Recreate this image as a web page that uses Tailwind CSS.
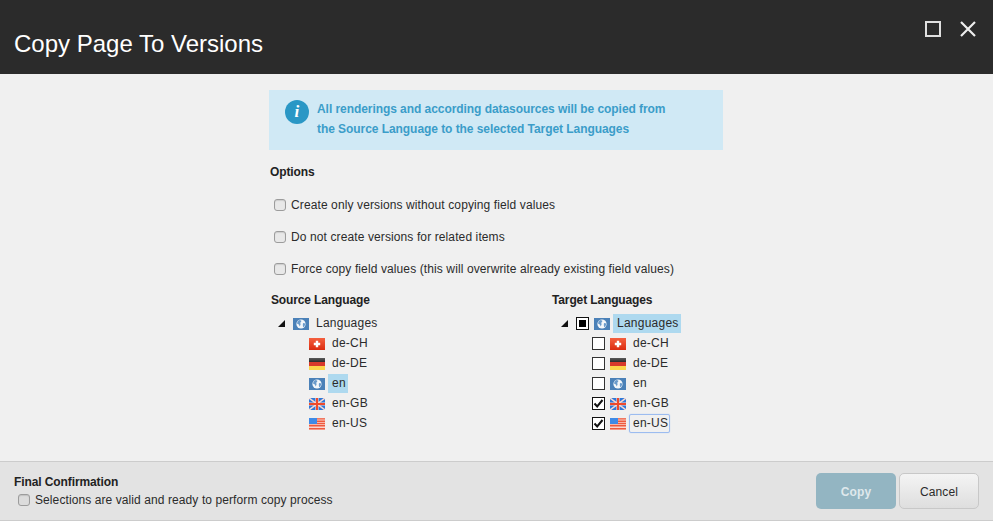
<!DOCTYPE html>
<html>
<head>
<meta charset="utf-8">
<script src="https://cdn.jsdelivr.net/npm/@tailwindcss/browser@4"></script>
</head>
<body class="m-0">
<svg width="0" height="0" class="absolute">
<defs>
<symbol id="globe" viewBox="0 0 16 12"><rect width="16" height="12" fill="#4b81b8"/><circle cx="8" cy="6" r="4.6" fill="#f4f7fa"/><path d="M6.2 2 8.2 2.4 8.2 3.8 7.2 4.8 7.6 6.3 6.8 8.6 5.8 6.6 4 5.4 4.6 3.4ZM10 5 12.4 5.4 11.6 8 10.2 9.6 9.8 7Z" fill="#6b9bcb"/></symbol>
<symbol id="ch" viewBox="0 0 16 12"><defs><linearGradient id="chg" x1="0" y1="0" x2="0" y2="1"><stop offset="0" stop-color="#f4603f"/><stop offset="1" stop-color="#dc2c10"/></linearGradient></defs><rect width="16" height="12" fill="url(#chg)"/><path d="M6.8 2.8H9.2V4.8H11.2V7.2H9.2V9.2H6.8V7.2H4.8V4.8H6.8Z" fill="#fff"/></symbol>
<symbol id="de" viewBox="0 0 16 12"><defs><linearGradient id="deg" x1="0" y1="0" x2="0" y2="1"><stop offset="0" stop-color="#5a5a5a"/><stop offset="1" stop-color="#2a2a2a"/></linearGradient></defs><rect width="16" height="4" fill="url(#deg)"/><rect y="4" width="16" height="4" fill="#d8392b"/><rect y="8" width="16" height="4" fill="#fcd44a"/></symbol>
<symbol id="gb" viewBox="0 0 16 12"><rect width="16" height="12" fill="#2f78d8"/><path d="M0 0 16 12M16 0 0 12" stroke="#f8d8d0" stroke-width="1.5"/><path d="M8 0V12M0 6H16" stroke="#f8d8d0" stroke-width="3.2"/><path d="M8 0V12M0 6H16" stroke="#ee4a2c" stroke-width="2"/></symbol>
<symbol id="us" viewBox="0 0 16 12"><rect width="16" height="12" fill="#fbd5cc"/><path d="M0 .9H16M0 3.2H16M0 5.5H16M0 7.8H16M0 10.8H16" stroke="#ee5a3e" stroke-width="1.4"/><rect width="8" height="6" fill="#3f8ae6"/></symbol>
</defs>
</svg>
<div class="w-[993px] h-[521px] overflow-hidden flex flex-col bg-[#f0f0f0] text-[12px] tracking-[0.11px] text-[#2b2b2b] font-['Liberation_Sans',Arial,sans-serif]">
  <header class="h-[74px] shrink-0 bg-[#2b2b2b] flex items-start justify-between pl-[14px] pr-[17px] tracking-normal">
    <h1 class="mt-[29px] text-[24px] leading-[30px] text-white font-normal">Copy Page To Versions</h1>
    <div class="flex gap-[19px] mt-[21px] items-center">
      <svg class="w-4 h-4" viewBox="0 0 16 16"><rect x="1" y="1" width="14" height="14" fill="none" stroke="#e0e0e0" stroke-width="2"/></svg>
      <svg class="w-4 h-4" viewBox="0 0 16 16"><path d="M1 1 15 15M15 1 1 15" stroke="#eeeeee" stroke-width="2.2"/></svg>
    </div>
  </header>

  <main class="h-[387px] shrink-0 pl-[269px] pt-4">
    <div class="w-[454px] h-[60px] bg-[#d0e9f5] flex items-start pl-[16px] pt-[9px]">
      <div class="w-6 h-6 mt-[1px] rounded-full bg-[#2a97c5] text-white flex items-center justify-center font-['Liberation_Serif',serif] font-bold italic text-[17px]">i</div>
      <p class="ml-2 font-bold text-[#3b9dc9] leading-5 text-[12px] tracking-[-0.06px]">All renderings and according datasources will be copied from<br>the Source Language to the selected Target Languages</p>
    </div>
    <h2 class="mt-[14px] ml-[1px] font-bold text-[12px] leading-[16px] text-[#222] tracking-[-0.1px]">Options</h2>
    <div class="mt-[9px] flex flex-col">
      <label class="h-8 flex items-center pl-[5px] gap-[5px]"><span class="w-3 h-3 rounded-[3px] border border-[#9c9c9c] bg-[#e8e8e8] shadow-[inset_0_1px_1px_rgba(0,0,0,0.12)]"></span>Create only versions without copying field values</label>
      <label class="h-8 flex items-center pl-[5px] gap-[5px]"><span class="w-3 h-3 rounded-[3px] border border-[#9c9c9c] bg-[#e8e8e8] shadow-[inset_0_1px_1px_rgba(0,0,0,0.12)]"></span>Do not create versions for related items</label>
      <label class="h-8 flex items-center pl-[5px] gap-[5px]"><span class="w-3 h-3 rounded-[3px] border border-[#9c9c9c] bg-[#e8e8e8] shadow-[inset_0_1px_1px_rgba(0,0,0,0.12)]"></span>Force copy field values (this will overwrite already existing field values)</label>
    </div>
    <div class="flex">
      <section class="w-[281px] pl-[2px]">
        <h2 class="font-bold leading-[16px] mt-[7px] text-[#222] tracking-[-0.13px]">Source Language</h2>
        <div class="mt-[5px] flex flex-col text-[12px] tracking-[0.24px]">
          <div class="h-5 flex items-center">
            <svg class="w-[7px] h-[7px] ml-[7px]" viewBox="0 0 7 7"><path d="M7 0V7H0Z" fill="#111"/></svg>
            <svg class="w-4 h-3 ml-[8px] mt-[2px]"><use href="#globe"/></svg>
            <span class="ml-[7px]">Languages</span>
          </div>
          <div class="h-5 flex items-center pl-[38px]"><svg class="w-4 h-3 mt-[2px]"><use href="#ch"/></svg><span class="ml-[7px]">de-CH</span></div>
          <div class="h-5 flex items-center pl-[38px]"><svg class="w-4 h-3 mt-[2px]"><use href="#de"/></svg><span class="ml-[7px]">de-DE</span></div>
          <div class="h-5 flex items-center pl-[38px]"><svg class="w-4 h-3 mt-[2px]"><use href="#globe"/></svg><span class="ml-[3px] pl-[4px] pr-[2px] h-[19px] leading-[18px] bg-[#aed9ef]">en</span></div>
          <div class="h-5 flex items-center pl-[38px]"><svg class="w-4 h-3 mt-[2px]"><use href="#gb"/></svg><span class="ml-[7px]">en-GB</span></div>
          <div class="h-5 flex items-center pl-[38px]"><svg class="w-4 h-3 mt-[2px]"><use href="#us"/></svg><span class="ml-[7px]">en-US</span></div>
        </div>
      </section>
      <section class="w-[172px] pl-[2px]">
        <h2 class="font-bold leading-[16px] mt-[7px] text-[#222] tracking-[-0.13px]">Target Languages</h2>
        <div class="mt-[5px] flex flex-col text-[12px] tracking-[0.24px]">
          <div class="h-5 flex items-center">
            <svg class="w-[7px] h-[7px] ml-[9px]" viewBox="0 0 7 7"><path d="M7 0V7H0Z" fill="#111"/></svg>
            <span class="ml-[8px] w-[13px] h-[13px] border border-[#111] bg-white flex items-center justify-center"><span class="w-[7px] h-[7px] bg-black"></span></span>
            <svg class="w-4 h-3 ml-[5px] mt-[2px]"><use href="#globe"/></svg>
            <span class="ml-[3px] pl-[4px] pr-[2px] h-[19px] leading-[18px] bg-[#aed9ef]">Languages</span>
          </div>
          <div class="h-5 flex items-center pl-[40px]"><span class="w-[13px] h-[13px] border border-[#333] bg-white"></span><svg class="w-4 h-3 ml-[5px] mt-[2px]"><use href="#ch"/></svg><span class="ml-[7px]">de-CH</span></div>
          <div class="h-5 flex items-center pl-[40px]"><span class="w-[13px] h-[13px] border border-[#333] bg-white"></span><svg class="w-4 h-3 ml-[5px] mt-[2px]"><use href="#de"/></svg><span class="ml-[7px]">de-DE</span></div>
          <div class="h-5 flex items-center pl-[40px]"><span class="w-[13px] h-[13px] border border-[#333] bg-white"></span><svg class="w-4 h-3 ml-[5px] mt-[2px]"><use href="#globe"/></svg><span class="ml-[7px]">en</span></div>
          <div class="h-5 flex items-center pl-[40px]"><span class="w-[13px] h-[13px] border border-[#111] bg-white flex items-center justify-center"><svg class="w-[11px] h-[11px]" viewBox="0 0 11 11"><path d="M1.5 5.5 4.2 8.5 9.5 2" fill="none" stroke="#111" stroke-width="2"/></svg></span><svg class="w-4 h-3 ml-[5px] mt-[2px]"><use href="#gb"/></svg><span class="ml-[7px]">en-GB</span></div>
          <div class="h-5 flex items-center pl-[40px]"><span class="w-[13px] h-[13px] border border-[#111] bg-white flex items-center justify-center"><svg class="w-[11px] h-[11px]" viewBox="0 0 11 11"><path d="M1.5 5.5 4.2 8.5 9.5 2" fill="none" stroke="#111" stroke-width="2"/></svg></span><svg class="w-4 h-3 ml-[5px] mt-[2px]"><use href="#us"/></svg><span class="ml-[3px] pl-[3px] pr-[1px] h-[19px] leading-[17px] border border-[#9cbcf0] rounded-[2px] shadow-[0_0_1px_#9cbcf0]">en-US</span></div>
        </div>
      </section>
    </div>
  </main>

  <footer class="h-[60px] shrink-0 bg-[#e3e3e3] border-t border-b border-[#cccccc] flex items-center justify-between pl-[14px] pr-[14px]">
    <div class="flex flex-col">
      <div class="font-bold leading-[16px] text-[12px] text-[#222] tracking-[-0.1px]">Final Confirmation</div>
      <label class="flex items-center h-[18px] pl-1 gap-[5px] mt-[1px] tracking-[0.09px]"><span class="w-3 h-3 rounded-[3px] border border-[#9c9c9c] bg-[#dcdcdc] shadow-[inset_0_1px_1px_rgba(0,0,0,0.12)]"></span>Selections are valid and ready to perform copy process</label>
    </div>
    <div class="flex gap-[3px]">
      <button class="w-20 h-9 pt-[1px] rounded-[5px] bg-[#93b5c2] text-[#dfe8ec] font-bold text-[12px]">Copy</button>
      <button class="w-20 h-9 pt-[1px] rounded-[5px] border border-[#c8c8c8] bg-gradient-to-b from-[#f4f4f4] to-[#dedede] text-[#2b2b2b] text-[12px]">Cancel</button>
    </div>
  </footer>
</div>
</body>
</html>
